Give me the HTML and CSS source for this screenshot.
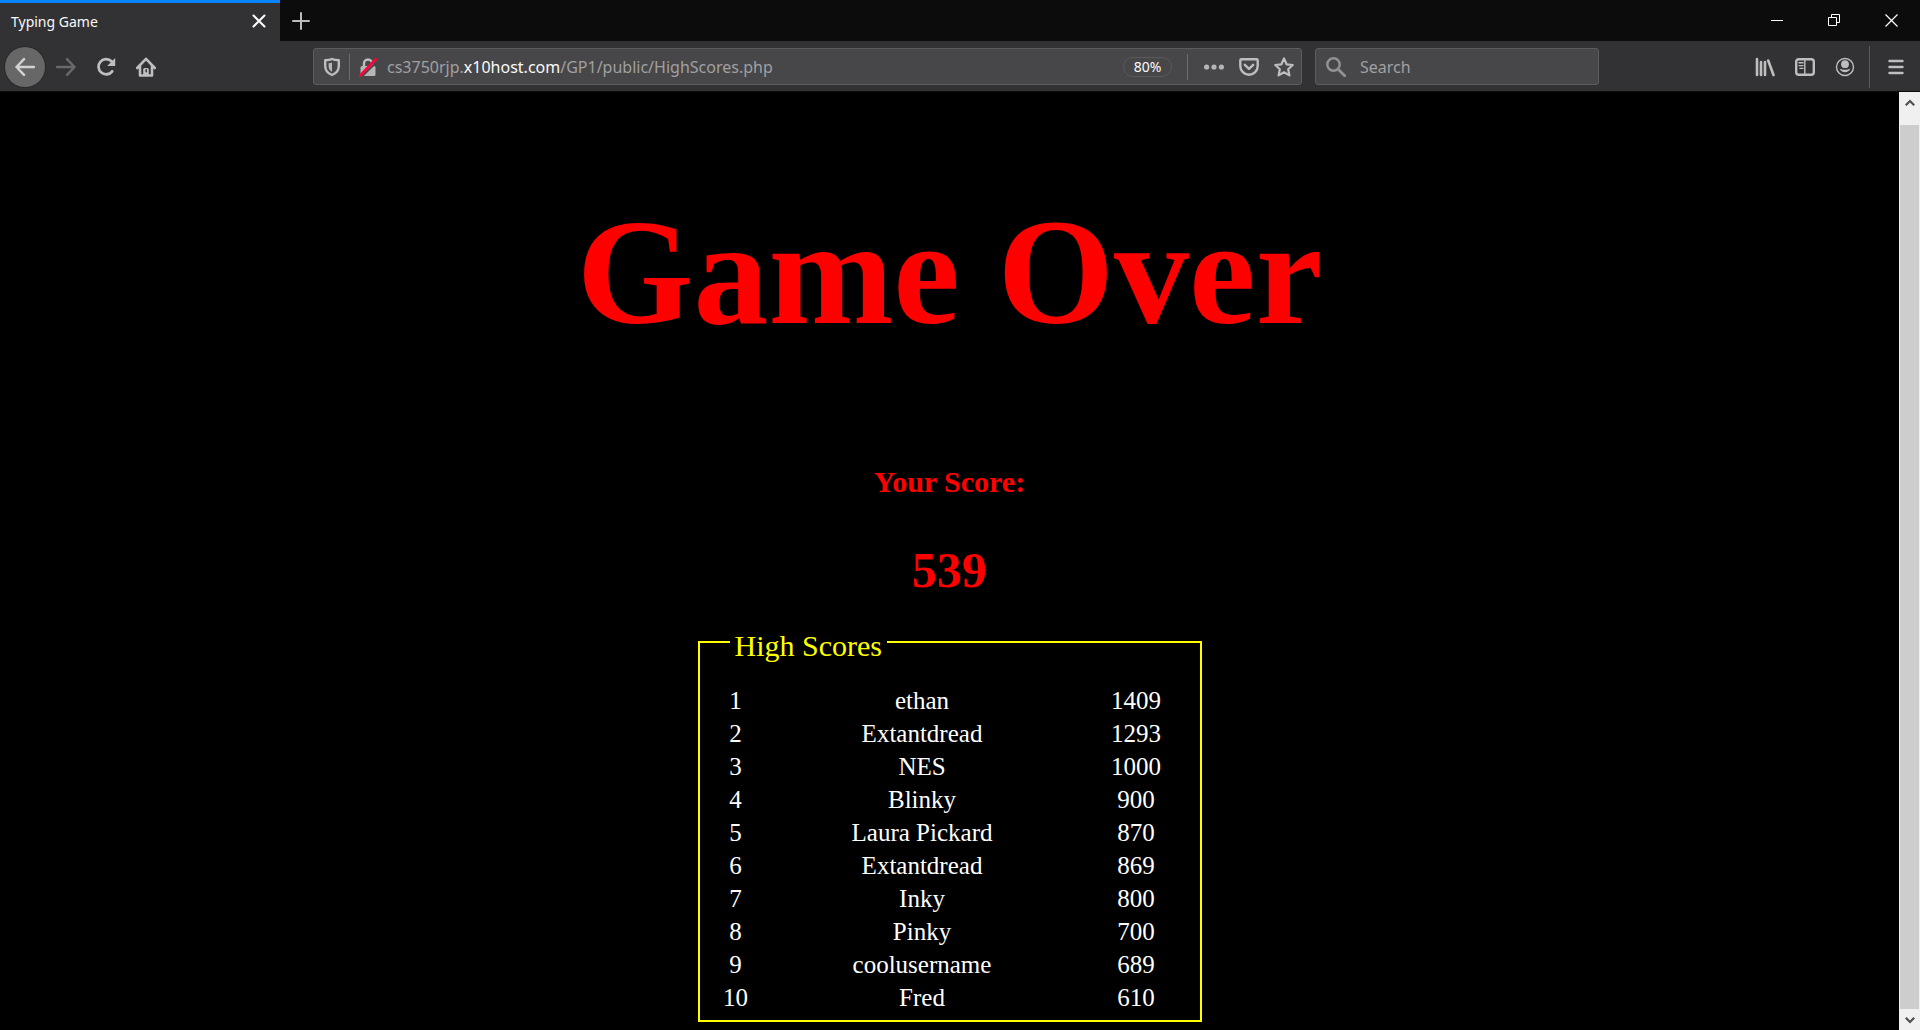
FILE: index.html
```html
<!DOCTYPE html>
<html lang="en">
<head>
<meta charset="utf-8">
<title>Typing Game</title>
<link rel="stylesheet" href="styles.css">
</head>
<body>
<header class="browser">
  <div class="titlebar">
    <div class="tab">
      <span class="tab-title">Typing Game</span>
      <button class="tab-close" type="button" aria-label="Close tab">
        <svg width="14" height="14" viewBox="0 0 14 14"><path d="M1.500 1.500l11 11M12.500 1.500l-11 11" stroke="#fff" stroke-width="2" stroke-linecap="round"/></svg>
      </button>
    </div>
    <button class="new-tab" type="button" aria-label="New tab">
      <svg width="18" height="18" viewBox="0 0 18 18"><path d="M9 1v16M1 9h16" stroke="#bcbcbd" stroke-width="2" stroke-linecap="round"/></svg>
    </button>
    <div class="window-controls">
      <button class="window-button" type="button" aria-label="Minimize">
        <svg width="13" height="13" viewBox="0 0 13 13"><path d="M0 6.500h12" stroke="#fff"/></svg>
      </button>
      <button class="window-button" type="button" aria-label="Restore">
        <svg width="13" height="13" viewBox="0 0 13 13" fill="none" stroke="#fff"><path d="M.5 3.500h8v8h-8zM3.500 3.500v-3h8v8h-3"/></svg>
      </button>
      <button class="window-button" type="button" aria-label="Close window">
        <svg width="13" height="13" viewBox="0 0 13 13"><path d="M.5.5l12 12M12.500.5l-12 12" stroke="#fff" stroke-width="1.200"/></svg>
      </button>
    </div>
  </div>

  <nav class="toolbar" aria-label="Navigation">
    <div class="nav-buttons">
      <button class="tool back" type="button" aria-label="Back">
        <svg width="20" height="20" viewBox="0 0 20 20"><path d="M19 10H1.500M9 2.200L1.500 10L9 17.800" stroke="#d2d2d2"/></svg>
      </button>
      <button class="tool forward" type="button" aria-label="Forward">
        <svg width="20" height="20" viewBox="0 0 20 20"><path d="M1 10h17.500M11 2.200l7.500 7.800l-7.500 7.800" stroke="#69696b"/></svg>
      </button>
      <button class="tool" type="button" aria-label="Reload">
        <svg width="20" height="20" viewBox="0 0 20 20"><path d="M15.500 4.300A7.600 7.600 0 1 0 16.200 14.300" stroke-width="2.800"/><path d="M19.200 1v8h-8z" fill="#bebebf" stroke="none"/></svg>
      </button>
      <button class="tool" type="button" aria-label="Home">
        <svg width="20" height="20" viewBox="0 0 20 20"><path d="M1.200 11L10 1.800L18.800 11M4 9v9.500h12V9" stroke-width="2.600"/><path d="M7.200 18.500v-6q0-1.500 1.500-1.500h2.600q1.500 0 1.500 1.500v6z" fill="#bebebf" stroke="none"/><path d="M10.200 12.700v2" stroke="#323234" stroke-width="1.500"/></svg>
      </button>
    </div>

    <div class="urlbar">
      <button class="shield" type="button" aria-label="Tracking protection">
        <svg width="18" height="20" viewBox="0 0 18 20"><path d="M9 2C7 3 4.500 3.200 2.200 3.200V9c0 4.500 2.500 7.300 6.800 9c4.300-1.700 6.800-4.500 6.800-9V3.200C13.500 3.200 11 3 9 2z" stroke-width="2.400"/><path d="M9 5.500v9.300C6.500 13.500 5.600 11.500 5.600 9V6.200C7 6.200 8 6 9 5.500z" fill="#b5b5b6" stroke="none"/></svg>
      </button>
      <span class="divider"></span>
      <button class="lock" type="button" aria-label="Connection is not secure">
        <svg width="18" height="20" viewBox="0 0 18 20"><path d="M5 10V6.500a4 4 0 0 1 8 0V10" stroke-width="2.400"/><rect x="1.500" y="9" width="15" height="10" rx="1.500" fill="#b5b5b6" stroke="none"/><path d="M2.500 20L17.500 5" stroke="#474749" stroke-width="2"/><path d="M1.400 18.400L16.600 2.400" stroke="#ff0039" stroke-width="2.800"/></svg>
      </button>
      <div class="url" role="textbox" aria-label="Address">cs3750rjp.<span class="host">x10host.com</span>/GP1/public/HighScores.php</div>
      <button class="zoom-level" type="button">80%</button>
      <span class="divider"></span>
      <div class="page-actions">
        <button class="action" type="button" aria-label="Page actions">
          <svg width="20" height="20" viewBox="0 0 20 20"><g fill="#b5b5b6" stroke="none"><circle cx="2.600" cy="10" r="2.600"/><circle cx="10" cy="10" r="2.600"/><circle cx="17.400" cy="10" r="2.600"/></g></svg>
        </button>
        <button class="action" type="button" aria-label="Save to Pocket">
          <svg width="20" height="20" viewBox="0 0 20 20"><path d="M2.500 2.300h15q1.200 0 1.200 1.200v5.500a8.700 8.700 0 0 1-17.400 0V3.500q0-1.200 1.200-1.200zM5.800 7.800l4.200 4l4.200-4" stroke-width="2.400"/></svg>
        </button>
        <button class="action" type="button" aria-label="Bookmark this page">
          <svg width="20" height="20" viewBox="0 0 20 20"><path d="M10 1.500l2.600 5.800l6.100.7l-4.500 4.200l1.200 6.200L10 15.300l-5.400 3.100l1.200-6.200L1.300 8l6.100-.7z" stroke-width="2.200"/></svg>
        </button>
      </div>
    </div>

    <label class="search">
      <svg width="20" height="20" viewBox="0 0 20 20"><circle cx="7.500" cy="7.500" r="6.200" stroke="#929293" stroke-width="2.500"/><path d="M12.200 12.200l6.500 6.500" stroke="#929293" stroke-width="2.800"/></svg>
      <input class="search-input" type="text" placeholder="Search" aria-label="Search">
    </label>

    <div class="menu-buttons">
      <button class="tool" type="button" aria-label="Library">
        <svg width="20" height="20" viewBox="0 0 20 20"><path d="M2 2v16M6 5v13M10 5v13M13.200 3.500L18.500 18" stroke-width="2.600"/></svg>
      </button>
      <button class="tool" type="button" aria-label="Sidebars">
        <svg width="20" height="20" viewBox="0 0 20 20"><rect x="1.200" y="2.200" width="17.600" height="15.600" rx="2.500" stroke-width="2.400"/><path d="M9.800 2v16" stroke-width="1.400"/><path d="M4 5.800h4M4 8.600h4M5 11.400h3" stroke-width="1.400"/></svg>
      </button>
      <button class="tool" type="button" aria-label="Account">
        <svg width="20" height="20" viewBox="0 0 20 20"><circle cx="10" cy="10" r="8.500" stroke-width="1.400"/><circle cx="10" cy="7.200" r="3.900" fill="#bebebf" stroke="none"/><path d="M4.600 11.800q5.400 2 10.800 0a6 6 0 0 1-10.800 0z" fill="#bebebf" stroke="none"/></svg>
      </button>
      <span class="menu-divider"></span>
      <button class="tool" type="button" aria-label="Open menu">
        <svg width="20" height="20" viewBox="0 0 20 20"><path d="M3.500 4h13M3.500 10h13M3.500 16h13" stroke-width="2.400"/></svg>
      </button>
    </div>
  </nav>
</header>

<div class="viewport">
  <main class="game">
    <h1 class="game-over">Game Over</h1>
    <h3 class="score-label">Your Score:</h3>
    <h2 class="score">539</h2>
    <fieldset class="high-scores">
      <legend class="high-scores-title">High Scores</legend>
      <table class="scores">
        <tbody>
          <tr><td class="rank">1</td><td>ethan</td><td class="points">1409</td></tr>
          <tr><td class="rank">2</td><td>Extantdread</td><td class="points">1293</td></tr>
          <tr><td class="rank">3</td><td>NES</td><td class="points">1000</td></tr>
          <tr><td class="rank">4</td><td>Blinky</td><td class="points">900</td></tr>
          <tr><td class="rank">5</td><td>Laura Pickard</td><td class="points">870</td></tr>
          <tr><td class="rank">6</td><td>Extantdread</td><td class="points">869</td></tr>
          <tr><td class="rank">7</td><td>Inky</td><td class="points">800</td></tr>
          <tr><td class="rank">8</td><td>Pinky</td><td class="points">700</td></tr>
          <tr><td class="rank">9</td><td>coolusername</td><td class="points">689</td></tr>
          <tr><td class="rank">10</td><td>Fred</td><td class="points">610</td></tr>
        </tbody>
      </table>
    </fieldset>
  </main>
  <div class="scrollbar">
    <button class="scroll-button" type="button" aria-label="Scroll up">
      <svg width="10" height="8" viewBox="0 0 10 8"><path d="M.8 6.200L5 2l4.200 4.200" stroke="#505050" stroke-width="2.200"/></svg>
    </button>
    <div class="scroll-track"><div class="scroll-thumb"></div></div>
    <button class="scroll-button" type="button" aria-label="Scroll down">
      <svg width="10" height="8" viewBox="0 0 10 8"><path d="M.8 1.800L5 6l4.200-4.200" stroke="#505050" stroke-width="2.200"/></svg>
    </button>
  </div>
</div>
</body>
</html>
```
FILE: styles.css
```css
* {
  box-sizing: border-box;
}

body {
  display: flex;
  flex-direction: column;
  min-height: 100vh;
  margin: 0;
  background: #000;
  font-family: "Liberation Serif", "Times New Roman", serif;
}

button {
  display: flex;
  align-items: center;
  justify-content: center;
  margin: 0;
  padding: 0;
  border: 0;
  background: none;
  color: inherit;
  font: inherit;
}

svg {
  display: block;
  flex: none;
  fill: none;
}

/* Browser window */
.browser {
  color: #f9f9fa;
  font-family: "Noto Sans", "Open Sans", sans-serif;
}

.titlebar {
  display: flex;
  height: 41px;
  background: #0c0c0d;
}

.tab {
  display: flex;
  align-items: center;
  justify-content: space-between;
  width: 280px;
  padding: 0 14px 2px 11px;
  border-top: 3px solid #0a84ff;
  background: #323234;
  font-size: 14px;
}

.new-tab {
  width: 42px;
}

.window-controls {
  display: flex;
  margin-left: auto;
}

.window-button {
  width: 57px;
}

.toolbar {
  display: grid;
  grid-template-columns: 167px 146fr 989fr 13px 284px 146fr 175px;
  align-items: center;
  height: 51px;
  padding-top: 1px;
  border-bottom: 1px solid #0c0c0d;
  background: #323234;
}

.toolbar svg {
  stroke: #bebebf;
  stroke-width: 2.5px;
  stroke-linecap: round;
  stroke-linejoin: round;
}

.nav-buttons {
  display: flex;
  padding-left: 5px;
}

.tool {
  width: 40px;
  height: 40px;
}

.back {
  margin-right: 1px;
  border-radius: 50%;
  background: #676768;
  box-shadow: 0 0 0 1px #29292b;
}

.urlbar,
.search {
  display: flex;
  align-items: center;
  height: 37px;
  border: 1px solid #5c5c5e;
  border-radius: 3px;
  background: #474749;
}

.urlbar {
  grid-column: 3;
}

.shield {
  width: 35px;
}

.lock {
  width: 37px;
  padding-right: 2px;
}

.divider {
  width: 1px;
  height: 26px;
  background: #6c6c6e;
}

.url {
  flex: 1;
  overflow: hidden;
  color: #a0a0a2;
  font-size: 16px;
  white-space: nowrap;
}

.host {
  color: #f9f9fa;
}

.zoom-level {
  width: 49px;
  height: 20px;
  margin-right: 15px;
  border: 1px solid #5a5a5c;
  border-radius: 10px;
  font-size: 14px;
}

.page-actions {
  display: flex;
  margin-left: 8px;
}

.action {
  width: 35px;
}

.search {
  grid-column: 5;
  gap: 14px;
  padding-left: 10px;
}

.search-input {
  flex: 1;
  min-width: 0;
  padding: 0;
  border: 0;
  outline: 0;
  background: none;
  color: #f9f9fa;
  font: inherit;
  font-size: 16px;
}

.search-input::placeholder {
  color: #a0a0a2;
  opacity: 1;
}

.menu-buttons {
  display: flex;
  grid-column: 7;
  align-items: center;
}

.menu-divider {
  width: 1px;
  height: 42px;
  margin: 0 6px 0 4px;
  background: #5c5c5e;
}

/* Page */
.viewport {
  display: flex;
  flex: 1;
}

.game {
  flex: 1;
  padding: 94px 0 8px;
  color: #fff;
  text-align: center;
}

.game-over,
.score-label,
.score {
  margin: 0;
  color: #f00;
}

.game-over {
  font-size: 150px;
  line-height: 172px;
}

.score-label {
  margin-top: 107px;
  font-size: 30px;
  line-height: 34px;
}

.score {
  margin-top: 42px;
  font-size: 50px;
  line-height: 58px;
}

.high-scores {
  width: 504px;
  margin: 22px auto 0;
  padding: 21px 0 6px;
  border: 2px solid #ff0;
}

.high-scores-title {
  margin-left: 30px;
  padding: 8px 5px 0;
  color: #ff0;
  font-size: 30px;
  line-height: 34px;
  text-align: left;
}

.scores {
  width: 100%;
  border-collapse: collapse;
  table-layout: fixed;
  font-size: 25px;
  line-height: 33px;
}

.scores td {
  padding: 0;
}

.scores .rank {
  width: 72px;
}

.scores .points {
  width: 127px;
}

.scrollbar {
  display: flex;
  flex-direction: column;
  width: 21px;
  background: #f0f0f0;
}

.scroll-button {
  height: 21px;
}

.scroll-track {
  display: flex;
  flex: 1;
  padding: 12px 1px 0;
}

.scroll-thumb {
  flex: 1;
  background: #cdcdcd;
}
```
